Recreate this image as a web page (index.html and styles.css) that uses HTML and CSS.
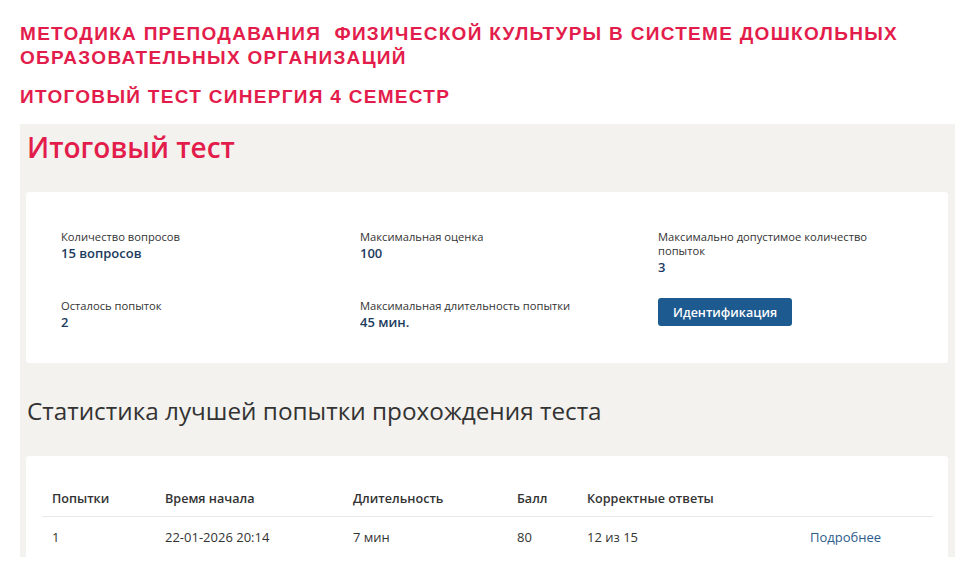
FILE: index.html
```html
<!DOCTYPE html>
<html lang="ru">
<head>
<meta charset="utf-8">
<title>Итоговый тест</title>
<link rel="stylesheet" href="styles.css">
</head>
<body>
<div class="page">
  <h1 class="course">МЕТОДИКА ПРЕПОДАВАНИЯ &nbsp;ФИЗИЧЕСКОЙ КУЛЬТУРЫ В СИСТЕМЕ ДОШКОЛЬНЫХ ОБРАЗОВАТЕЛЬНЫХ ОРГАНИЗАЦИЙ</h1>
  <h2 class="subtitle">ИТОГОВЫЙ ТЕСТ СИНЕРГИЯ 4 СЕМЕСТР</h2>
  <div class="panel">
    <div class="title">Итоговый тест</div>
    <div class="card info">
      <div class="item">
        <div class="label">Количество вопросов</div>
        <div class="value">15 вопросов</div>
      </div>
      <div class="item">
        <div class="label">Максимальная оценка</div>
        <div class="value">100</div>
      </div>
      <div class="item">
        <div class="label">Максимально допустимое количество попыток</div>
        <div class="value plain">3</div>
      </div>
      <div class="item">
        <div class="label">Осталось попыток</div>
        <div class="value">2</div>
      </div>
      <div class="item">
        <div class="label">Максимальная длительность попытки</div>
        <div class="value">45 мин.</div>
      </div>
      <div class="item">
        <button class="btn">Идентификация</button>
      </div>
    </div>
    <div class="stats-title">Статистика лучшей попытки прохождения теста</div>
    <div class="card table-card">
      <table class="stats">
        <thead>
          <tr>
            <th class="c1">Попытки</th>
            <th class="c2">Время начала</th>
            <th class="c3">Длительность</th>
            <th class="c4">Балл</th>
            <th class="c5">Корректные ответы</th>
            <th class="c6"></th>
          </tr>
        </thead>
        <tbody>
          <tr>
            <td>1</td>
            <td>22-01-2026 20:14</td>
            <td>7 мин</td>
            <td>80</td>
            <td>12 из 15</td>
            <td><a class="more" href="#">Подробнее</a></td>
          </tr>
        </tbody>
      </table>
    </div>
  </div>
</div>
</body>
</html>
```

FILE: styles.css
```css
html, body {
  margin: 0;
  padding: 0;
  background: #ffffff;
}

.page {
  padding: 22px 12px 0 20px;
  font-family: "Open Sans", "Noto Sans", sans-serif;
}

.course {
  margin: 0;
  font-family: "Liberation Sans", Arial, sans-serif;
  font-weight: bold;
  font-size: 19px;
  line-height: 24px;
  color: #e31d4b;
  letter-spacing: 1.3px;
  width: 910px;
}

.subtitle {
  margin: 15px 0 0 0;
  font-family: "Liberation Sans", Arial, sans-serif;
  font-weight: bold;
  font-size: 19px;
  line-height: 24px;
  color: #e31d4b;
  letter-spacing: 1.3px;
}

.panel {
  margin-top: 15px;
  width: 935px;
  height: 433px;
  overflow: hidden;
  background: #f3f2ef;
  padding: 0 7px 0 6px;
  box-sizing: border-box;
}

.title {
  padding: 4px 0 0 1px;
  font-size: 28px;
  line-height: 38px;
  font-weight: 600;
  color: #e31d4b;
}

.card {
  background: #ffffff;
  border-radius: 3px;
}

.info {
  margin-top: 26px;
  padding: 38px 35px 32px 35px;
  display: grid;
  grid-template-columns: 299px 298px 1fr;
  row-gap: 23px;
}

.label {
  font-size: 11.2px;
  line-height: 14px;
  color: #333333;
  max-width: 240px;
}

.value {
  font-size: 13px;
  line-height: 18px;
  font-weight: 600;
  color: #1c3b5e;
}

.btn {
  display: block;
  margin-top: -1px;
  height: 28px;
  padding: 0 15px;
  border: none;
  border-radius: 3px;
  background: #1d5a90;
  color: #ffffff;
  font-family: "Open Sans", "Noto Sans", sans-serif;
  font-size: 12.5px;
  font-weight: 600;
}

.stats-title {
  padding: 31px 0 0 1px;
  font-size: 24.3px;
  line-height: 34px;
  color: #333333;
  font-weight: 400;
}

.table-card {
  margin-top: 28px;
  padding: 26px 15px 20px 16px;
}

.stats {
  width: 100%;
  border-collapse: collapse;
  font-size: 13px;
  color: #333333;
}

.stats th {
  text-align: left;
  font-weight: 600;
  font-size: 12.6px;
  padding: 7px 10px 9px 10px;
  border-bottom: 1px solid #e8e8e8;
  height: 18px;
}

.stats td {
  padding: 11px 10px 8px 10px;
  line-height: 18px;
}

.c1 { width: 93px; }
.c2 { width: 168px; }
.c3 { width: 144px; }
.c4 { width: 50px; }
.c5 { width: 203px; }

.more {
  color: #2b5c8c;
  text-decoration: none;
}
```
